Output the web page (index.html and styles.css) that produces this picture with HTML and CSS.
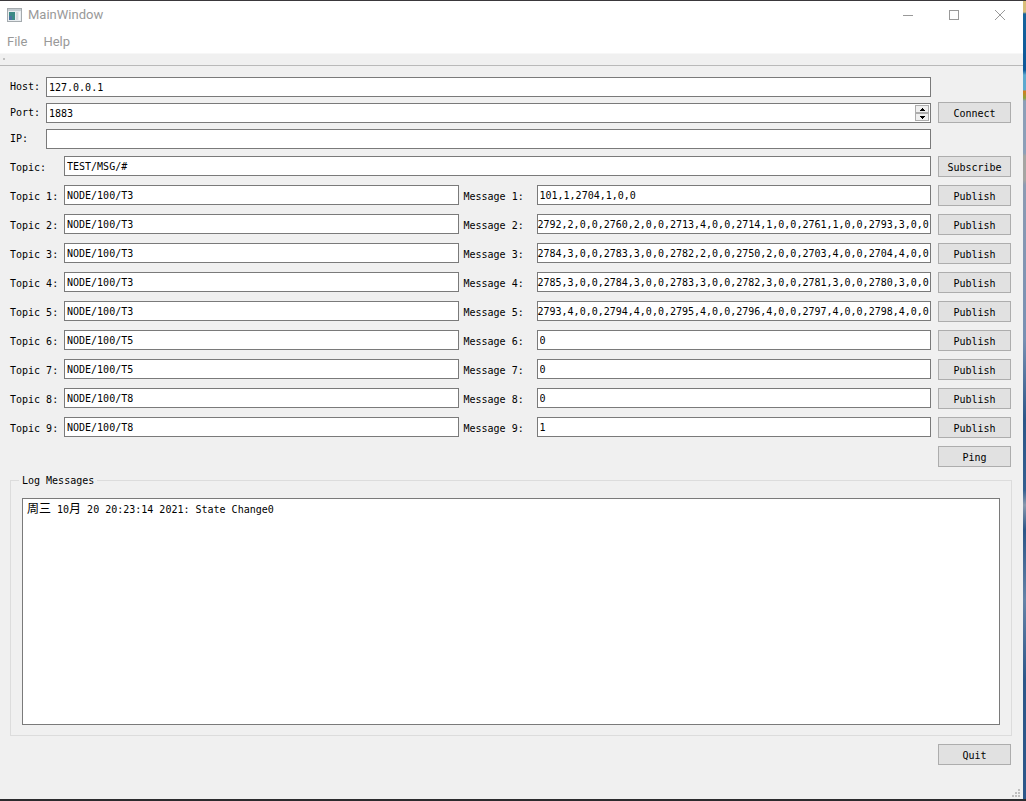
FILE: index.html
```
<!DOCTYPE html>
<html lang="en">

<head>
  <meta charset="UTF-8">
  <meta name="viewport" content="width=device-width, initial-scale=1.0">
  <title>MainWindow</title>
  <link rel="stylesheet" href="styles.css">
</head>

<body>
  <div class="window">
    <header class="title-bar">
      <svg class="app-icon" width="15" height="14" viewBox="0 0 15 14">
        <rect x="0.5" y="0.5" width="14" height="13" fill="#e9edf0" stroke="#a4aaae" />
        <rect x="1" y="1" width="13" height="2" fill="#c5ccd1" />
        <rect x="2" y="4" width="6" height="8" fill="#3c8a86" />
        <rect x="2" y="8" width="3" height="4" fill="#4a73a0" />
        <rect x="9" y="4" width="2" height="8" fill="#d5d9dc" />
        <rect x="12" y="4" width="1" height="8" fill="#f8f8f8" />
      </svg>
      <h1>MainWindow</h1>
      <button class="caption" aria-label="Minimize">
        <svg width="10" height="10" viewBox="0 0 10 10"><path d="M0 5.5h10" stroke="#999" /></svg>
      </button>
      <button class="caption" aria-label="Maximize">
        <svg width="10" height="10" viewBox="0 0 10 10"><rect x="0.5" y="0.5" width="9" height="9" fill="none" stroke="#999" /></svg>
      </button>
      <button class="caption" aria-label="Close">
        <svg width="10" height="10" viewBox="0 0 10 10"><path d="M0 0l10 10M10 0L0 10" stroke="#999" /></svg>
      </button>
    </header>
    <nav class="menu-bar">
      <a href="#">File</a>
      <a href="#">Help</a>
    </nav>
    <div class="tool-bar"></div>

    <main>
      <div class="connection">
        <label for="host">Host:</label>
        <input type="text" id="host" value="127.0.0.1">
        <span></span>
        <label for="port">Port:</label>
        <div class="spin-box">
          <input type="text" inputmode="numeric" id="port" value="1883">
          <div class="steps">
            <button class="step" id="port-up" aria-label="Increase"><svg width="5" height="3" viewBox="0 0 5 3"><path d="M2 0h1v1h1v1h1v1H0V2h1V1h1z" /></svg></button>
            <button class="step" id="port-down" aria-label="Decrease"><svg width="5" height="3" viewBox="0 0 5 3"><path d="M0 0h5v1H4v1H3v1H2V2H1V1H0z" /></svg></button>
          </div>
        </div>
        <button class="push">Connect</button>
        <label for="ip">IP:</label>
        <input type="text" id="ip">
        <span></span>
      </div>

      <div class="topics">
        <label for="topic">Topic:</label>
        <input type="text" id="topic" class="wide" value="TEST/MSG/#">
        <button class="push">Subscribe</button>

        <label for="topic1">Topic 1:</label>
        <input type="text" id="topic1" value="NODE/100/T3">
        <label for="message1" class="message">Message 1:</label>
        <input type="text" id="message1" value="101,1,2704,1,0,0">
        <button class="push">Publish</button>

        <label for="topic2">Topic 2:</label>
        <input type="text" id="topic2" value="NODE/100/T3">
        <label for="message2" class="message">Message 2:</label>
        <input type="text" id="message2" class="full" value="2792,2,0,0,2760,2,0,0,2713,4,0,0,2714,1,0,0,2761,1,0,0,2793,3,0,0">
        <button class="push">Publish</button>

        <label for="topic3">Topic 3:</label>
        <input type="text" id="topic3" value="NODE/100/T3">
        <label for="message3" class="message">Message 3:</label>
        <input type="text" id="message3" class="full" value="2784,3,0,0,2783,3,0,0,2782,2,0,0,2750,2,0,0,2703,4,0,0,2704,4,0,0">
        <button class="push">Publish</button>

        <label for="topic4">Topic 4:</label>
        <input type="text" id="topic4" value="NODE/100/T3">
        <label for="message4" class="message">Message 4:</label>
        <input type="text" id="message4" class="full" value="2785,3,0,0,2784,3,0,0,2783,3,0,0,2782,3,0,0,2781,3,0,0,2780,3,0,0">
        <button class="push">Publish</button>

        <label for="topic5">Topic 5:</label>
        <input type="text" id="topic5" value="NODE/100/T3">
        <label for="message5" class="message">Message 5:</label>
        <input type="text" id="message5" class="full" value="2793,4,0,0,2794,4,0,0,2795,4,0,0,2796,4,0,0,2797,4,0,0,2798,4,0,0">
        <button class="push">Publish</button>

        <label for="topic6">Topic 6:</label>
        <input type="text" id="topic6" value="NODE/100/T5">
        <label for="message6" class="message">Message 6:</label>
        <input type="text" id="message6" value="0">
        <button class="push">Publish</button>

        <label for="topic7">Topic 7:</label>
        <input type="text" id="topic7" value="NODE/100/T5">
        <label for="message7" class="message">Message 7:</label>
        <input type="text" id="message7" value="0">
        <button class="push">Publish</button>

        <label for="topic8">Topic 8:</label>
        <input type="text" id="topic8" value="NODE/100/T8">
        <label for="message8" class="message">Message 8:</label>
        <input type="text" id="message8" value="0">
        <button class="push">Publish</button>

        <label for="topic9">Topic 9:</label>
        <input type="text" id="topic9" value="NODE/100/T8">
        <label for="message9" class="message">Message 9:</label>
        <input type="text" id="message9" value="1">
        <button class="push">Publish</button>

        <button class="push ping">Ping</button>
      </div>

      <fieldset>
        <legend>Log Messages</legend>
        <div class="log" role="log" tabindex="0"><span class="cn">周三</span> 10<span class="cn">月</span> 20 20:23:14 2021: State Change0</div>
      </fieldset>

      <div class="actions">
        <button class="push">Quit</button>
      </div>
    </main>

    <footer class="status-bar">
      <svg width="8" height="8" viewBox="0 0 8 8" fill="#bfbfbf">
        <path d="M6 0h2v2H6zM3 3h2v2H3zM6 3h2v2H6zM0 6h2v2H0zM3 6h2v2H3zM6 6h2v2H6z" />
      </svg>
    </footer>
  </div>

  <script>
    var port = document.querySelector('#port')

    function step(amount) {
      var value = Number(port.value) + amount
      port.value = Math.min(65535, Math.max(0, value))
    }

    document.querySelector('#port-up').addEventListener('click', function () { step(1) })
    document.querySelector('#port-down').addEventListener('click', function () { step(-1) })
  </script>
</body>

</html>
```
FILE: styles.css
```
* {
  margin: 0;
  padding: 0;
  box-sizing: border-box;
}

/* desktop behind the window */
body {
  min-height: 100vh;
  display: flex;
  padding: 1px 3px 2px 0;
  background:
    linear-gradient(#2b2b2e, #2b2b2e) bottom / 100% 2px no-repeat,
    linear-gradient(#3a383b, #3a383b) top / 100% 1px no-repeat,
    linear-gradient(#d8bd79 0, #d8bd79 12px, #17649c 14px, #0c5799 70px, #5ea9cf 75px, #5ea9cf 90px, #d87a20 91px, #8aa33a 98px, #8c9fb8 101px, #8c9fb8 153px, #a5a5a3 156px, #a5a5a3 180px, #8c9bb3 185px, #7890b3 340px, #2c5688 420px, #345f90 490px, #8899ae 505px, #2b5587 530px, #6684a8 600px, #2d5789 680px, #2d5789 100%);
}

body,
input,
button {
  font-family: "DejaVu Sans Mono", "Noto Sans CJK SC", monospace;
  font-size: 10px;
  color: #000;
}

.window {
  flex: 1;
  display: flex;
  flex-direction: column;
  background-color: #f0f0f0;
}

.title-bar {
  display: flex;
  align-items: center;
  height: 28px;
  padding-left: 7px;
  background-color: #fff;
}

.title-bar h1 {
  flex: 1;
  margin-left: 6px;
  font: 13px/20px Roboto, sans-serif;
  color: #999;
}

.caption {
  display: flex;
  align-items: center;
  justify-content: center;
  width: 46px;
  height: 28px;
  border: none;
  background-color: #fff;
}

.caption:hover {
  background-color: #e5e5e5;
}

.menu-bar {
  display: flex;
  gap: 16px;
  height: 25px;
  padding-left: 7px;
  background-color: #fff;
  border-bottom: 1px solid #f7f7f7;
}

.menu-bar a {
  font: 13px/26px Roboto, sans-serif;
  color: #999;
  text-decoration: none;
}

.tool-bar {
  height: 12px;
  border-bottom: 1px solid #b9b9b9;
}

.tool-bar::before {
  content: "";
  display: block;
  width: 2px;
  height: 2px;
  margin: 4px 0 0 3px;
  background-color: #c0c0c0;
}

main {
  flex: 1;
  display: flex;
  flex-direction: column;
  padding: 10px 11px 0 10px;
}

label {
  line-height: 24px;
  white-space: nowrap;
}

input {
  width: 100%;
  min-width: 0;
  height: 20px;
  padding: 0 2px;
  border: 1px solid #7a7a7a;
  background-color: #fff;
  outline: none;
}

input:focus {
  border-color: #0078d7;
}

.push {
  width: 73px;
  height: 21px;
  padding-top: 1px;
  border: 1px solid #adadad;
  background-color: #e1e1e1;
}

.push:hover {
  border-color: #0078d7;
  background-color: #e5f1fb;
}

.connection {
  display: grid;
  grid-template-columns: 36px 1fr 80px;
  grid-auto-rows: 21px;
  row-gap: 5px;
  align-items: end;
  padding-right: 1px;
}

.connection label {
  line-height: 20px;
}

.connection .push,
.topics .push {
  justify-self: end;
}

.spin-box {
  display: flex;
  align-items: center;
  height: 20px;
  padding-right: 1px;
  border: 1px solid #7a7a7a;
  background-color: #fff;
}

.spin-box input {
  height: 18px;
  border: none;
}

.steps {
  display: flex;
  flex-direction: column;
}

.step {
  display: flex;
  align-items: center;
  justify-content: center;
  width: 14px;
  height: 8px;
  border: 1px solid #adadad;
  background-color: #f0f0f0;
}

.topics {
  display: grid;
  grid-template-columns: 54px 1fr 78px 1fr 80px;
  grid-auto-rows: 21px;
  row-gap: 8px;
  margin-top: 7px;
  padding-right: 1px;
}

.wide {
  grid-column: span 3;
}

.message {
  padding-left: 5px;
}

/* long values run right up to the left edge */
.full {
  padding: 0;
}

.ping {
  grid-column: 5;
}

fieldset {
  flex: 1;
  display: flex;
  min-height: 120px;
  margin-top: 5px;
  padding: 9px 11px 10px;
  border: 1px solid #dcdcdc;
}

legend {
  margin-left: -3px;
  padding: 0 3px;
  line-height: 17px;
}

.log {
  flex: 1;
  padding: 0 4px;
  border: 1px solid #7a7a7a;
  background-color: #fff;
  line-height: 20px;
  overflow: auto;
}

.cn {
  font-size: 12px;
}

.actions {
  display: flex;
  justify-content: flex-end;
  padding: 8px 1px 0 0;
}

.status-bar {
  display: flex;
  justify-content: flex-end;
  align-items: flex-end;
  height: 34px;
  padding: 0 3px 2px 0;
}
```
